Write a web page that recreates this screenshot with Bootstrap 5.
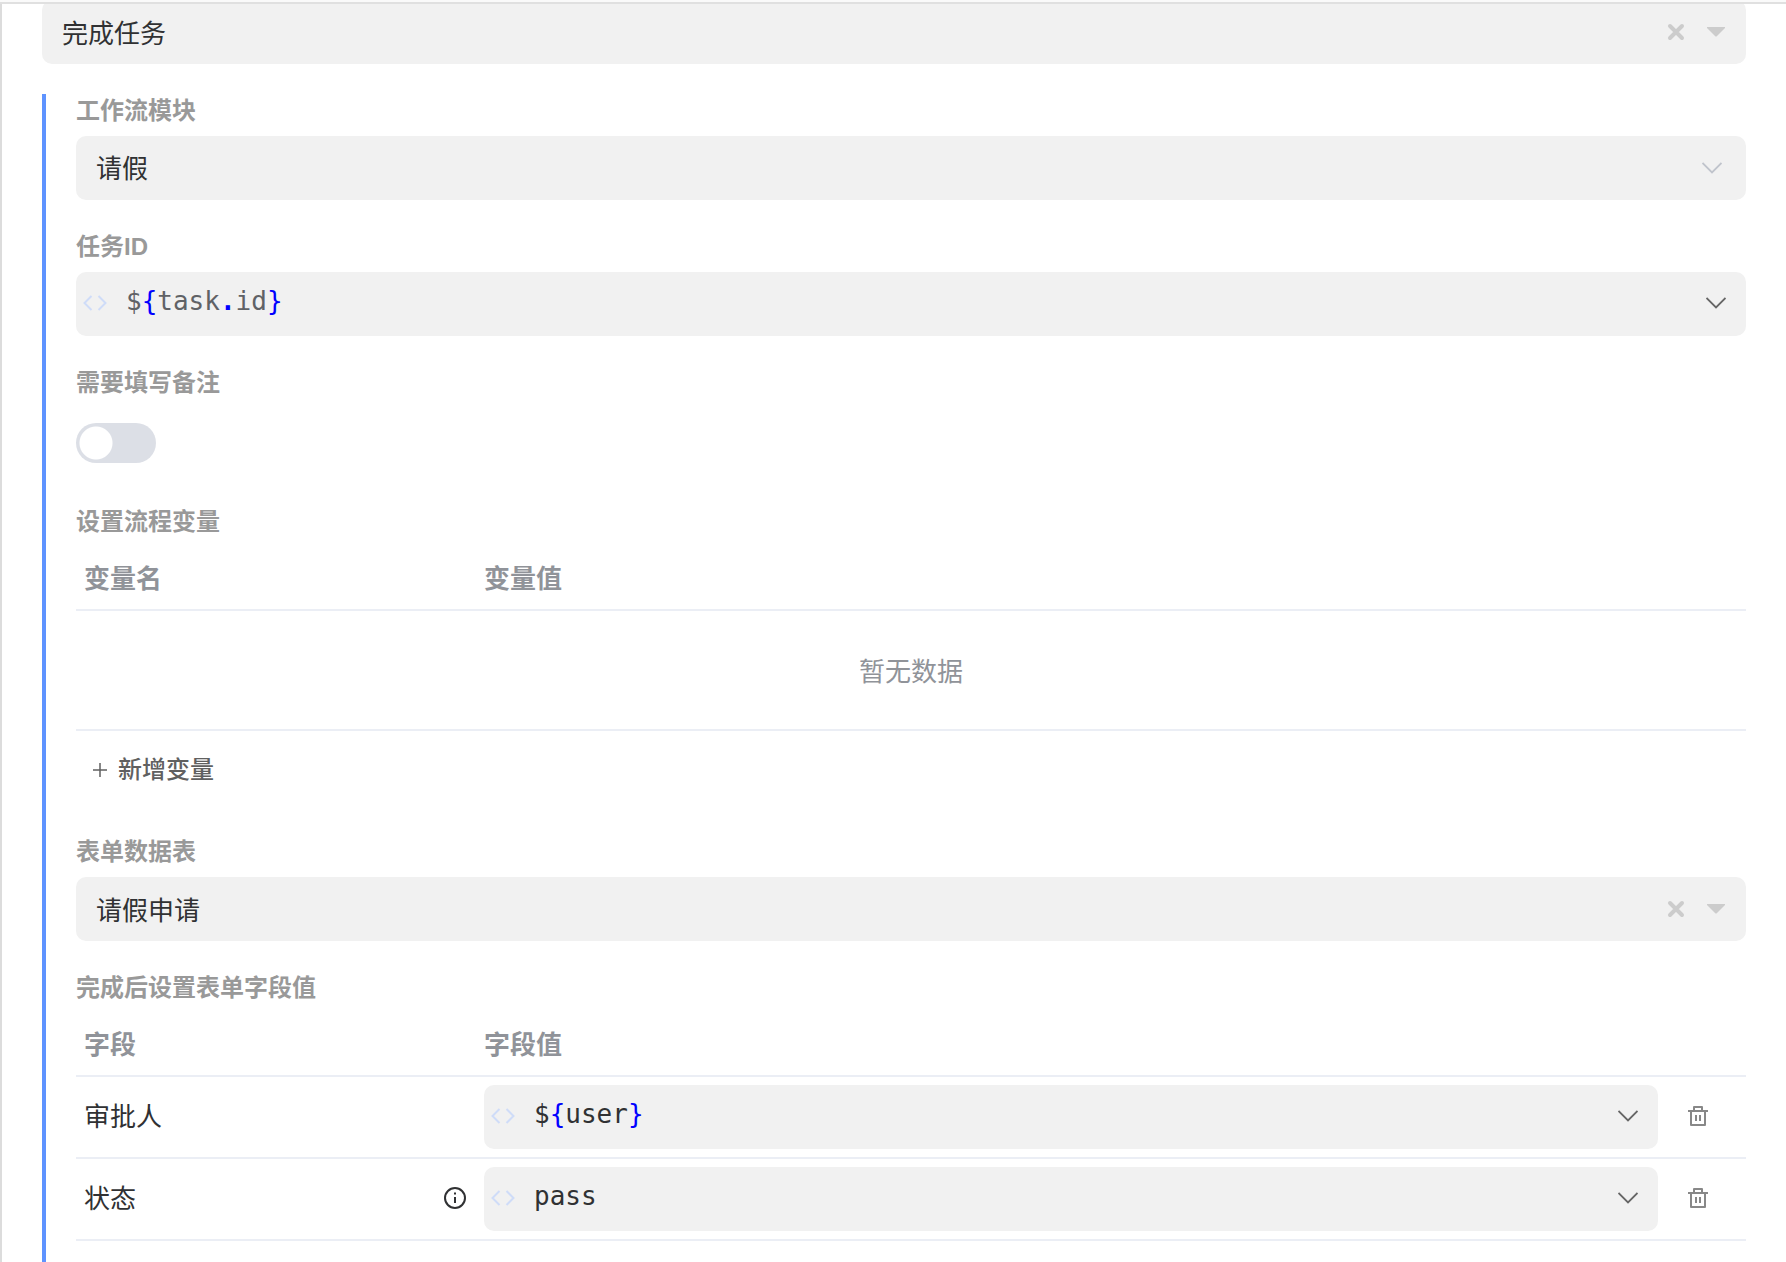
<!DOCTYPE html>
<html lang="zh-CN">
<head>
<meta charset="utf-8">
<meta name="viewport" content="width=device-width, initial-scale=1">
<title>完成任务</title>
<link href="https://cdn.jsdelivr.net/npm/bootstrap@5.3.0/dist/css/bootstrap.min.css" rel="stylesheet">
<style>
  body { font-family: "Liberation Sans", "Noto Sans CJK SC", sans-serif; font-size: 26px; line-height: 32px; color: #303133; }
  svg { display: block; fill: none; }
  .top-edge { height: 4px; background: #fafafa; border-bottom: 2px solid #e0e0e0; }
  .page { border-left: 2px solid #dcdcdc; padding: 0 40px; }
  .panel { margin-top: 30px; padding: 0 0 20px 30px; border-left: 4px solid #5e93ff; }
  .field + .field { margin-top: 30px; }
  .caption { display: block; padding-top: 2px; margin-bottom: 10px; font-size: 24px; line-height: 30px; font-weight: 700; color: #999; }
  .control { height: 64px; border-radius: 10px; background: #f1f1f1; }
  .control select { appearance: none; height: 64px; padding: 2px 20px 0; color: inherit; font: inherit; outline-offset: -2px; }
  .control select.clearable { padding-top: 4px; }
  .plain { padding: 0; border: 0; background: none; color: inherit; }
  .tools { gap: 21px; padding-right: 20px; color: #ccc; }
  .arrow { padding: 0 20px 3px 0; color: #666; }
  .arrow.pale { padding: 0 24px 0 0; color: #c0c4cc; }
  .code-mark { margin: 0 19px 2px 7px; color: #cfdcf8; }
  .code { padding-bottom: 6px; font-family: "DejaVu Sans Mono", monospace; line-height: 58px; outline: 0; }
  .code b { color: #00f; }
  .code .brace { font-weight: 400; }
  .muted-code { color: #606266; }
  .switch-row { padding: 15px 0 12px; }
  .switch-row input { appearance: none; display: block; width: 80px; height: 40px; margin: 0; border-radius: 20px;
    background: radial-gradient(circle at 20px 20px, #fff 16px, #dcdfe6 17px); }
  .grid-table { table-layout: fixed; border-collapse: separate; border-spacing: 0; }
  .grid-table th, .grid-table td { padding: 0 8px; border-bottom: 2px solid #ebeef5; vertical-align: middle; }
  .grid-table th { height: 64px; padding-top: 2px; color: #909399; font-weight: 700; }
  .grid-table td { height: 82px; }
  .grid-table td.none { height: 120px; padding-top: 3px; color: #909399; text-align: center; }
  .col-name { width: 400px; }
  .col-act { width: 80px; }
  .add { height: 74px; padding: 3px 0 0 16px; gap: 10px; font-size: 24px; font-weight: 500; color: #606060; }
  .trash { margin: 0 0 2px 14px; color: #888; }
  .info { margin-bottom: 3px; }
</style>
<script src="https://cdn.jsdelivr.net/npm/bootstrap@5.3.0/dist/js/bootstrap.bundle.min.js"></script>
</head>
<body>
<svg class="d-none" aria-hidden="true">
  <symbol id="i-x" viewBox="0 0 18 18"><path d="M3 3l12 12M15 3L3 15" stroke="currentColor" stroke-width="4" stroke-linecap="round"/></symbol>
  <symbol id="i-caret" viewBox="0 0 20 12"><path d="M1 1h18v1l-8.500 8.500h-1L1 2z" fill="currentColor"/></symbol>
  <symbol id="i-down" viewBox="0 0 20 12"><path d="M.5 1l9.500 9.500L19.500 1" stroke="currentColor" stroke-width="1.800"/></symbol>
  <symbol id="i-code" viewBox="0 0 24 16"><path d="M8.500 1L1.500 8l7 7M15.500 1l7 7-7 7" stroke="currentColor" stroke-width="2"/></symbol>
  <symbol id="i-trash" viewBox="0 0 20 20"><path d="M0 5h20M6 5V1h8v4M3 5v14h14V5M8 9v6M12 9v6" stroke="currentColor" stroke-width="2" stroke-linejoin="round"/></symbol>
  <symbol id="i-info" viewBox="0 0 26 26"><circle cx="13" cy="13" r="10" stroke="currentColor" stroke-width="2"/><path d="M13 12v6M13 7.500v2" stroke="currentColor" stroke-width="2"/></symbol>
  <symbol id="i-plus" viewBox="0 0 16 16"><path d="M1 8h14M8 1v14" stroke="currentColor" stroke-width="1.500"/></symbol>
</svg>

<div class="top-edge fixed-top"></div>

<main class="page d-flex flex-column min-vh-100">
  <div class="control d-flex align-items-center">
    <select class="plain clearable flex-grow-1" aria-label="操作类型"><option>完成任务</option></select>
    <div class="tools d-flex align-items-center">
      <button class="plain" type="button" aria-label="清除"><svg width="18" height="18"><use href="#i-x"/></svg></button>
      <svg width="20" height="12"><use href="#i-caret"/></svg>
    </div>
  </div>

  <section class="panel flex-grow-1">
    <div class="field">
      <label class="caption" for="module">工作流模块</label>
      <div class="control d-flex align-items-center">
        <select class="plain flex-grow-1" id="module"><option>请假</option></select>
        <div class="arrow pale"><svg width="20" height="12"><use href="#i-down"/></svg></div>
      </div>
    </div>

    <div class="field">
      <span class="caption" id="task-id">任务ID</span>
      <div class="control d-flex align-items-center">
        <svg class="code-mark" width="24" height="16"><use href="#i-code"/></svg>
        <div class="code muted-code flex-grow-1" contenteditable="true" spellcheck="false" role="textbox" aria-labelledby="task-id">$<b class="brace">{</b>task<b>.</b>id<b class="brace">}</b></div>
        <button class="plain arrow" type="button" aria-label="展开"><svg width="20" height="12"><use href="#i-down"/></svg></button>
      </div>
    </div>

    <div class="field">
      <label class="caption" for="remark">需要填写备注</label>
      <div class="switch-row"><input type="checkbox" role="switch" id="remark"></div>
    </div>

    <div class="field">
      <span class="caption" id="vars">设置流程变量</span>
      <table class="grid-table w-100" aria-labelledby="vars">
        <colgroup><col class="col-name"><col></colgroup>
        <thead><tr><th>变量名</th><th>变量值</th></tr></thead>
        <tbody><tr><td class="none" colspan="2">暂无数据</td></tr></tbody>
      </table>
      <button class="plain add d-flex align-items-center" type="button"><svg width="16" height="16"><use href="#i-plus"/></svg>新增变量</button>
    </div>

    <div class="field">
      <label class="caption" for="sheet">表单数据表</label>
      <div class="control d-flex align-items-center">
        <select class="plain clearable flex-grow-1" id="sheet"><option>请假申请</option></select>
        <div class="tools d-flex align-items-center">
          <button class="plain" type="button" aria-label="清除"><svg width="18" height="18"><use href="#i-x"/></svg></button>
          <svg width="20" height="12"><use href="#i-caret"/></svg>
        </div>
      </div>
    </div>

    <div class="field">
      <span class="caption" id="values">完成后设置表单字段值</span>
      <table class="grid-table w-100" aria-labelledby="values">
        <colgroup><col class="col-name"><col><col class="col-act"></colgroup>
        <thead><tr><th>字段</th><th>字段值</th><th></th></tr></thead>
        <tbody>
          <tr>
            <td>审批人</td>
            <td>
              <div class="control d-flex align-items-center">
                <svg class="code-mark" width="24" height="16"><use href="#i-code"/></svg>
                <div class="code flex-grow-1" contenteditable="true" spellcheck="false" role="textbox" aria-label="审批人">$<b class="brace">{</b>user<b class="brace">}</b></div>
                <button class="plain arrow" type="button" aria-label="展开"><svg width="20" height="12"><use href="#i-down"/></svg></button>
              </div>
            </td>
            <td><button class="plain trash d-block" type="button" aria-label="删除"><svg width="20" height="20"><use href="#i-trash"/></svg></button></td>
          </tr>
          <tr>
            <td>
              <div class="d-flex align-items-center justify-content-between">状态<svg class="info" width="26" height="26"><use href="#i-info"/></svg></div>
            </td>
            <td>
              <div class="control d-flex align-items-center">
                <svg class="code-mark" width="24" height="16"><use href="#i-code"/></svg>
                <div class="code flex-grow-1" contenteditable="true" spellcheck="false" role="textbox" aria-label="状态">pass</div>
                <button class="plain arrow" type="button" aria-label="展开"><svg width="20" height="12"><use href="#i-down"/></svg></button>
              </div>
            </td>
            <td><button class="plain trash d-block" type="button" aria-label="删除"><svg width="20" height="20"><use href="#i-trash"/></svg></button></td>
          </tr>
        </tbody>
      </table>
    </div>
  </section>
</main>
</body>
</html>
